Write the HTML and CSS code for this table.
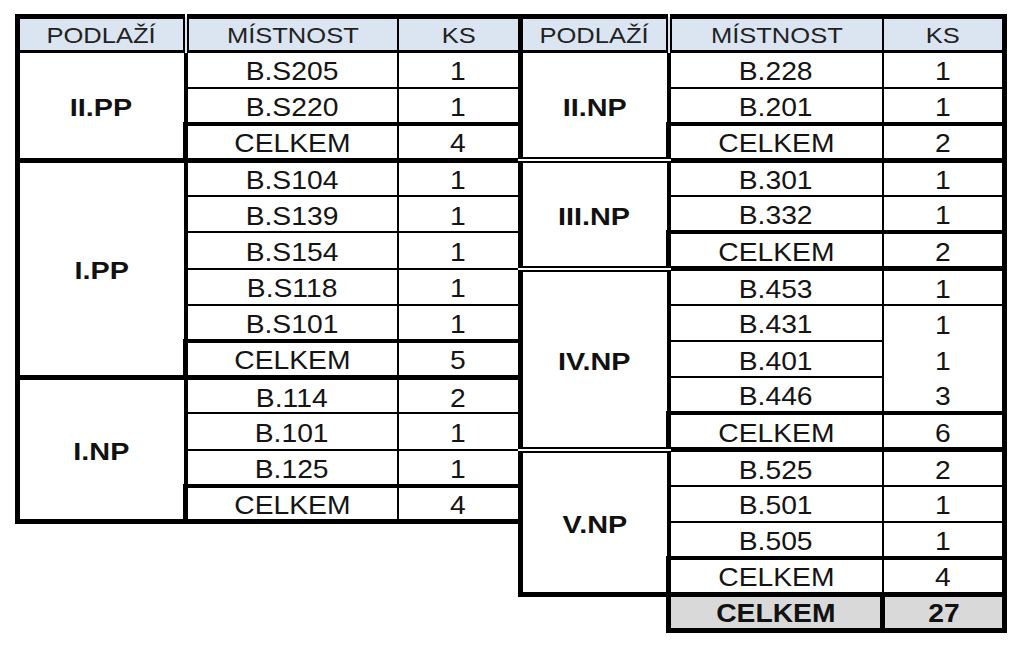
FILE: index.html
```html
<!DOCTYPE html>
<html lang="cs">
<head>
<meta charset="utf-8">
<title>Podlaží – místnosti</title>
<link rel="stylesheet" href="styles.css">
</head>
<body>
<table class="sheet">
  <colgroup>
    <col class="c1"><col class="c2"><col class="c3"><col class="c4"><col class="c5"><col class="c6">
  </colgroup>
  <tr class="hd">
    <th class="h1"><span class="t">PODLAŽÍ</span></th>
    <th class="h2"><span class="t">MÍSTNOST</span></th>
    <th class="h3"><span class="t">KS</span></th>
    <th class="h4"><span class="t">PODLAŽÍ</span></th>
    <th class="h2"><span class="t">MÍSTNOST</span></th>
    <th class="h6"><span class="t">KS</span></th>
  </tr>
  <tr>
    <td class="g" rowspan="3"><span class="b">II.PP</span></td>
    <td class="m"><span class="t">B.S205</span></td><td class="k"><span class="t">1</span></td>
    <td class="g gd" rowspan="3"><span class="b">II.NP</span></td>
    <td class="m"><span class="t">B.228</span></td><td class="k kr"><span class="t">1</span></td>
  </tr>
  <tr>
    <td class="m"><span class="t">B.S220</span></td><td class="k"><span class="t">1</span></td>
    <td class="m"><span class="t">B.201</span></td><td class="k kr"><span class="t">1</span></td>
  </tr>
  <tr>
    <td class="m sm"><span class="t">CELKEM</span></td><td class="k sm"><span class="t">4</span></td>
    <td class="m sm"><span class="t">CELKEM</span></td><td class="k kr sm"><span class="t">2</span></td>
  </tr>
  <tr>
    <td class="g" rowspan="6"><span class="b">I.PP</span></td>
    <td class="m"><span class="t">B.S104</span></td><td class="k"><span class="t">1</span></td>
    <td class="g gd" rowspan="3"><span class="b">III.NP</span></td>
    <td class="m"><span class="t">B.301</span></td><td class="k kr"><span class="t">1</span></td>
  </tr>
  <tr>
    <td class="m"><span class="t">B.S139</span></td><td class="k"><span class="t">1</span></td>
    <td class="m"><span class="t">B.332</span></td><td class="k kr"><span class="t">1</span></td>
  </tr>
  <tr>
    <td class="m"><span class="t">B.S154</span></td><td class="k"><span class="t">1</span></td>
    <td class="m sm"><span class="t">CELKEM</span></td><td class="k kr sm"><span class="t">2</span></td>
  </tr>
  <tr>
    <td class="m"><span class="t">B.S118</span></td><td class="k"><span class="t">1</span></td>
    <td class="g gd" rowspan="5"><span class="b">IV.NP</span></td>
    <td class="m"><span class="t">B.453</span></td><td class="k kr"><span class="t">1</span></td>
  </tr>
  <tr>
    <td class="m"><span class="t">B.S101</span></td><td class="k"><span class="t">1</span></td>
    <td class="m"><span class="t">B.431</span></td><td class="k kr"><span class="t">1</span></td>
  </tr>
  <tr>
    <td class="m sm"><span class="t">CELKEM</span></td><td class="k sm"><span class="t">5</span></td>
    <td class="m"><span class="t">B.401</span></td><td class="k kr open"><span class="t">1</span></td>
  </tr>
  <tr>
    <td class="g" rowspan="4"><span class="b">I.NP</span></td>
    <td class="m"><span class="t">B.114</span></td><td class="k"><span class="t">2</span></td>
    <td class="m"><span class="t">B.446</span></td><td class="k kr open"><span class="t">3</span></td>
  </tr>
  <tr>
    <td class="m"><span class="t">B.101</span></td><td class="k"><span class="t">1</span></td>
    <td class="m sm"><span class="t">CELKEM</span></td><td class="k kr sm"><span class="t">6</span></td>
  </tr>
  <tr>
    <td class="m"><span class="t">B.125</span></td><td class="k"><span class="t">1</span></td>
    <td class="g" rowspan="4"><span class="b">V.NP</span></td>
    <td class="m"><span class="t">B.525</span></td><td class="k kr"><span class="t">2</span></td>
  </tr>
  <tr>
    <td class="m sm"><span class="t">CELKEM</span></td><td class="k sm"><span class="t">4</span></td>
    <td class="m"><span class="t">B.501</span></td><td class="k kr"><span class="t">1</span></td>
  </tr>
  <tr>
    <td class="void" colspan="3" rowspan="3"></td>
    <td class="m"><span class="t">B.505</span></td><td class="k kr"><span class="t">1</span></td>
  </tr>
  <tr>
    <td class="m sm"><span class="t">CELKEM</span></td><td class="k kr sm"><span class="t">4</span></td>
  </tr>
  <tr>
    <td class="void2"></td>
    <td class="grand"><span class="b">CELKEM</span></td>
    <td class="grand"><span class="b">27</span></td>
  </tr>
</table>
</body>
</html>
```

FILE: styles.css
```css
html, body {
  margin: 0;
  padding: 0;
  background: #ffffff;
}

.sheet {
  border-collapse: collapse;
  table-layout: fixed;
  width: 992px;
  margin: 14px 0 0 15px;
  font-family: "Liberation Sans", Arial, sans-serif;
  color: #141414;
}

.c1 { width: 168px; }
.c2 { width: 212px; }
.c3 { width: 123px; }
.c4 { width: 148px; }
.c5 { width: 214px; }
.c6 { width: 122px; }

tr { height: 36.2px; }
tr.hd { height: 35px; }

th,
td {
  border: 2px solid #000;
  padding: 0;
  text-align: center;
  vertical-align: middle;
  font-size: 25px;
  line-height: 1;
  font-weight: normal;
}

.t,
.b {
  display: inline-block;
  transform: scaleX(1.13);
}

.b {
  font-weight: bold;
  font-size: 24px;
  transform: scaleX(1.2);
  color: #111;
}

/* header */
.hd th {
  background: #dbe5f1;
  border-top: 5px solid #000;
  border-bottom: 3px solid #000;
  font-size: 22px;
  color: #222;
  padding-top: 2px;
}
.hd .t { transform: scaleX(1.16); }
.hd .h1 { border-left: 5px solid #000; border-right: 6px double #000; }
.hd .h3 { border-right: 5px solid #000; }
.hd .h4 { border-left: 5px solid #000; border-right: 6px double #000; }
.hd .h6 { border-right: 5px solid #000; }

/* floor (group) cells */
.g {
  border-left: 5px solid #000;
  border-right: 4px solid #000;
  border-bottom: 5px solid #000;
  padding-top: 4px;
}
.g.gd { border-bottom: 6px double #000; }

/* room cells */
.m { padding-top: 4px; }
.k { border-right: 5px solid #000; padding-top: 4px; }

/* subtotal rows */
.sm {
  border-top: 4px solid #000;
  border-bottom: 5px solid #000;
}
.m.sm { border-left: 5px solid #000; }

/* merged KS column in IV.NP */
.k.open { border-top-style: hidden; }

/* empty area */
.void,
.void2 {
  border: none;
  border-left-style: hidden;
  border-bottom-style: hidden;
}

/* grand total */
.grand {
  background: #d9d9d9;
  border: 5px solid #000;
  padding-top: 3px;
}
.grand .b {
  font-size: 25px;
  transform: scaleX(1.13);
}
```
